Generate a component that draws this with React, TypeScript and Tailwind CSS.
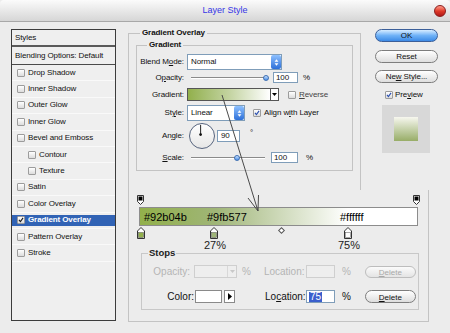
import React from 'react';

const styleItems = [
  { label: 'Drop Shadow' },
  { label: 'Inner Shadow' },
  { label: 'Outer Glow' },
  { label: 'Inner Glow' },
  { label: 'Bevel and Emboss' },
  { label: 'Contour', sub: true },
  { label: 'Texture', sub: true },
  { label: 'Satin' },
  { label: 'Color Overlay' },
  { label: 'Gradient Overlay', active: true },
  { label: 'Pattern Overlay' },
  { label: 'Stroke' },
];

const colorStops = [
  { pct: 0, fill: '#92b04b' },
  { pct: 27, fill: '#9fb577' },
  { pct: 75, fill: '#ffffff' },
];

const Box = ({ checked = false, blue = false }: { checked?: boolean; blue?: boolean }) => (
  <span className="relative inline-block w-[8px] h-[8px] shrink-0 border border-[#9c9c9c] rounded-[1px] bg-gradient-to-b from-[#ffffff] to-[#dcdcdc]">
    {checked && (
      <svg viewBox="0 0 8 8" className="absolute inset-0 w-full h-full">
        <path d="M1.3 3.8 L3.2 6 L6.8 1.2" fill="none" stroke={blue ? '#2a4fb0' : '#1a1a1a'} strokeWidth="1.5" />
      </svg>
    )}
  </span>
);

const Pill = ({ children, blue = false, disabled = false }: { children: React.ReactNode; blue?: boolean; disabled?: boolean }) => (
  <div
    className={
      blue
        ? 'h-[13px] rounded-full border border-[#3b5f99] bg-gradient-to-b from-[#d6ecff] via-[#6fb2f7] to-[#3c8ae6] flex items-center justify-center text-[#111]'
        : disabled
        ? 'h-[12px] rounded-full border border-[#bdbdbd] bg-gradient-to-b from-[#fbfbfb] to-[#e4e4e4] flex items-center justify-center text-[#a8a8a8]'
        : 'h-[13px] rounded-full border border-[#7d7d7d] bg-gradient-to-b from-[#ffffff] to-[#dedede] flex items-center justify-center text-[#111]'
    }
  >
    <span className="whitespace-nowrap">{children}</span>
  </div>
);

const Spin = () => (
  <div className="w-[10px] h-full rounded-[2px] bg-gradient-to-b from-[#8dc0ff] to-[#2c6fd8] flex items-center justify-center">
    <svg viewBox="0 0 6 10" className="w-[5px] h-[9px]">
      <path d="M3 1 L5.3 4 L0.7 4 Z M3 9 L5.3 6 L0.7 6 Z" fill="#fff" />
    </svg>
  </div>
);

const Slider = ({ w, pos }: { w: string; pos: number }) => (
  <div className={`relative ${w} h-[6px] flex items-center`}>
    <div className="w-full h-[2px] bg-[#8a8a8a] border-b border-white" />
    <div className="absolute top-[0px] w-[6px] h-[6px] rounded-full bg-gradient-to-b from-[#c9e2ff] to-[#4c8fe6] border border-[#3d6fb3]" style={{ left: `calc(${pos}% - 3px)` }} />
  </div>
);

const OpacityStop = () => (
  <svg viewBox="0 0 7 10" className="w-[7px] h-[10px]">
    <path d="M0.5 0.5 H6.5 V6.5 L3.5 9.5 L0.5 6.5 Z" fill="#fff" stroke="#333" />
    <rect x="1.5" y="1.5" width="4" height="4" fill="#000" />
  </svg>
);

const ColorStop = ({ fill }: { fill: string }) => (
  <svg viewBox="0 0 8 12" className="w-[8px] h-[12px]">
    <path d="M4 0.5 L7.5 4 V11.5 H0.5 V4 Z" fill="#fff" stroke="#333" />
    <rect x="1.5" y="5.5" width="5" height="5" fill={fill} stroke="#555" strokeWidth="0.5" />
  </svg>
);

export default function App() {
  return (
    <div className="relative w-[450px] h-[333px] overflow-hidden bg-[#ececec] font-['Liberation_Sans',Arial,sans-serif] text-[8px] tracking-[-0.1px] leading-none text-[#111] flex flex-col whitespace-nowrap">
      {/* title bar */}
      <div className="relative h-[22px] shrink-0 rounded-t-[4px] border-b border-[#a8a8a8] bg-gradient-to-b from-[#fbfbfb] to-[#d6d6d6] flex items-center justify-center">
        <span className="text-[9px] tracking-normal text-[#3535e6]">Layer Style</span>
        <div className="absolute right-[4px] top-[5px] w-[12px] h-[12px] rounded-full border border-[#8a1d1d] bg-gradient-to-b from-[#ff9a8a] via-[#e03a2a] to-[#b01818]" />
      </div>

      <div className="flex flex-1">
        {/* styles list */}
        <div className="ml-[11px] mt-[7px] w-[105px] h-[292px] border border-[#3c3c3c] bg-[#efefef] flex flex-col">
          <div className="h-[17px] px-[3px] flex items-center border-b-[2px] border-[#5a5a5a]">Styles</div>
          <div className="h-[18px] px-[3px] flex items-center border-b border-[#4a4a4a]">Blending Options: Default</div>
          {styleItems.map((it) => (
            <div key={it.label} className="h-[16.4px] py-[2px] border-b border-[#f9f9f9]">
              <div className={it.active ? 'h-full flex items-center bg-[#3163b5] text-white font-bold' : 'h-full flex items-center'}>
                <span className={it.sub ? 'ml-[16px] flex' : 'ml-[5px] flex'}>
                  <Box checked={it.active} />
                </span>
                <span className="ml-[3px]">{it.label}</span>
              </div>
            </div>
          ))}
        </div>

        <div className="ml-[12px] w-[322px] flex flex-col">
          <div className="flex items-start">
            {/* Gradient Overlay group */}
            <fieldset className="mt-[6px] w-[233px] h-[162px] border-l border-t border-r border-[#c3c3c3]">
              <legend className="ml-[11px] px-[2px] h-[10px] leading-[10px] font-bold">Gradient Overlay</legend>
              <fieldset className="mt-[2px] ml-[7px] w-[217px] border border-[#c3c3c3] pb-[7px]">
                <legend className="ml-[10px] px-[2px] h-[10px] leading-[10px] font-bold">Gradient</legend>
                {/* blend mode */}
                <div className="mt-[4px] h-[16px] flex items-center">
                  <span className="w-[47px] text-right">Blend M<u>o</u>de:</span>
                  <div className="ml-[3px] w-[95px] h-[16px] border border-[#7f9db9] bg-white flex items-center justify-between">
                    <span className="pl-[3px]">Normal</span>
                    <Spin />
                  </div>
                </div>
                {/* opacity */}
                <div className="mt-[2px] h-[11px] flex items-center">
                  <span className="w-[47px] text-right">O<u>p</u>acity:</span>
                  <div className="ml-[7px]"><Slider w="w-[76px]" pos={99} /></div>
                  <div className="ml-[6px] w-[25px] h-[11px] border border-[#7f9db9] bg-white flex items-center pl-[2px]">100</div>
                  <span className="ml-[5px]">%</span>
                </div>
                {/* gradient */}
                <div className="mt-[5px] h-[13px] flex items-center">
                  <span className="w-[47px] text-right">Gradient:</span>
                  <div className="ml-[3px] w-[92px] h-[13px] border border-[#555] flex">
                    <div className="flex-1 bg-gradient-to-r from-[#92b04b] via-[#c3d3a0] to-[#ffffff]" />
                    <div className="w-[8px] border-l border-[#555] bg-white flex items-center justify-center">
                      <svg viewBox="0 0 5 3" className="w-[5px] h-[3px]"><path d="M0 0 H5 L2.5 3 Z" fill="#000" /></svg>
                    </div>
                  </div>
                  <span className="ml-[9px] flex"><Box /></span>
                  <span className="ml-[3px] text-[#444]"><u>R</u>everse</span>
                </div>
                {/* style */}
                <div className="mt-[4px] h-[16px] flex items-center">
                  <span className="w-[47px] text-right">St<u>y</u>le:</span>
                  <div className="ml-[3px] w-[58px] h-[16px] border border-[#7f9db9] bg-white flex items-center justify-between">
                    <span className="pl-[3px]">Linear</span>
                    <Spin />
                  </div>
                  <span className="ml-[8px] flex"><Box checked blue /></span>
                  <span className="ml-[3px]">Align w<u>i</u>th Layer</span>
                </div>
                {/* angle */}
                <div className="mt-[2px] h-[26px] flex items-center">
                  <span className="w-[47px] text-right">An<u>g</u>le:</span>
                  <div className="relative ml-[5px] w-[26px] h-[26px] rounded-full border-[1.5px] border-[#56647e] bg-gradient-to-b from-[#ffffff] to-[#e6e6e6]">
                    <svg viewBox="0 0 26 26" className="absolute inset-0 w-full h-full">
                      <line x1="11.5" y1="11.5" x2="11.5" y2="1" stroke="#111" strokeWidth="1" />
                      <circle cx="11.5" cy="11.5" r="1.5" fill="#111" />
                    </svg>
                  </div>
                  <div className="ml-[2px] w-[23px] h-[12px] border border-[#7f9db9] bg-white flex items-center pl-[3px]">90</div>
                  <span className="ml-[10px] self-start mt-[6px]">°</span>
                </div>
                {/* scale */}
                <div className="mt-[3px] h-[11px] flex items-center">
                  <span className="w-[47px] text-right"><u>S</u>cale:</span>
                  <div className="ml-[7px]"><Slider w="w-[74px]" pos={62} /></div>
                  <div className="ml-[6px] w-[27px] h-[11px] border border-[#7f9db9] bg-white flex items-center pl-[2px]">100</div>
                  <span className="ml-[8px]">%</span>
                </div>
              </fieldset>
            </fieldset>

            {/* buttons */}
            <div className="mt-[7px] ml-[14px] w-[63px] flex flex-col">
              <Pill blue>OK</Pill>
              <div className="mt-[8px]"><Pill>Reset</Pill></div>
              <div className="mt-[7px]"><Pill>Ne<u>w</u> Style...</Pill></div>
              <div className="mt-[7px] h-[10px] ml-[10px] flex items-center">
                <Box checked blue />
                <span className="ml-[2px]">Pre<u>v</u>iew</span>
              </div>
              <div className="mt-[5px] ml-[7px] w-[48px] h-[48px] bg-[#d8d8d8] flex items-center justify-center">
                <div className="w-[24px] h-[24px] bg-gradient-to-b from-[#f7f7ef] to-[#98ad67]" />
              </div>
            </div>
          </div>

          {/* gradient editor */}
          <div className="w-[301px] h-[132px] border-l border-r border-b border-[#c3c3c3] pt-[5px] tracking-normal">
            <div className="ml-[10px] w-[279px]">
              <div className="relative h-[9px]">
                <div className="absolute left-[-2px] top-0"><OpacityStop /></div>
                <div className="absolute right-[-2px] top-0"><OpacityStop /></div>
              </div>
              <div className="relative mt-[3px] h-[19px] border border-[#8c8c8c] bg-[linear-gradient(to_right,#92b04b_0%,#9fb577_27%,#ffffff_75%,#ffffff_100%)] text-[11px] text-black">
                <span className="absolute left-[4px] top-[4px]">#92b04b</span>
                <span className="absolute left-[67px] top-[4px]">#9fb577</span>
                <span className="absolute left-[200px] top-[4px]">#ffffff</span>
              </div>
              <div className="relative mt-[1px] h-[12px]">
                {colorStops.map((s) => (
                  <div key={s.pct} className="absolute top-0" style={{ left: s.pct === 0 ? '-2px' : `calc(${s.pct}% - 4px)` }}>
                    <ColorStop fill={s.fill} />
                  </div>
                ))}
                <div className="absolute top-[1px] left-[140px] w-[5px] h-[5px] rotate-45 border border-[#555] bg-white" />
              </div>
              <div className="relative h-[11px] text-[11px] text-[#222]">
                <span className="absolute left-[65px] top-[1px]">27%</span>
                <span className="absolute left-[199px] top-[1px]">75%</span>
              </div>
            </div>

            {/* stops */}
            <fieldset className="ml-[12px] mt-[-2px] w-[278px] h-[62px] border border-[#c8c8c8] text-[10px]">
              <legend className="ml-[6px] px-[1px] h-[10px] leading-[10px] text-[9.5px] font-bold text-[#222]">Stops</legend>
              <div className="mt-[7px] h-[13px] flex items-center text-[#b4b4b4]">
                <span className="w-[48px] text-right">Opacity:</span>
                <div className="ml-[4px] w-[43px] h-[13px] border border-[#cfcfcf] bg-[#eeeeee] flex justify-end">
                  <div className="w-[9px] h-full border-l border-[#d8d8d8] flex items-center justify-center">
                    <svg viewBox="0 0 5 3" className="w-[5px] h-[3px]"><path d="M0 0 H5 L2.5 3 Z" fill="#c8c8c8" /></svg>
                  </div>
                </div>
                <span className="ml-[5px]">%</span>
                <span className="ml-[13px] w-[40px]">Location:</span>
                <div className="ml-[2px] w-[29px] h-[13px] border border-[#cfcfcf] bg-[#eeeeee]" />
                <span className="ml-[7px]">%</span>
                <div className="ml-[14px] w-[51px]"><Pill disabled><span className="text-[8px]"><u>D</u>elete</span></Pill></div>
              </div>
              <div className="mt-[12px] h-[13px] flex items-center">
                <span className="w-[52px] text-right">Color:</span>
                <div className="ml-[1px] w-[27px] h-[13px] border border-[#8a8a8a] bg-white" />
                <div className="ml-[2px] w-[11px] h-[13px] border border-[#8a8a8a] bg-white flex items-center justify-center">
                  <svg viewBox="0 0 4 7" className="w-[4px] h-[7px]"><path d="M0 0 L4 3.5 L0 7 Z" fill="#000" /></svg>
                </div>
                <span className="ml-[30px] w-[40px]">Lo<u>c</u>ation:</span>
                <div className="ml-[1px] w-[29px] h-[13px] border border-[#7f9db9] bg-white flex items-center pl-[2px]">
                  <span className="bg-[#3a5fcd] text-white px-[1px]">75</span>
                </div>
                <span className="ml-[7px]">%</span>
                <div className="ml-[14px] w-[51px]"><Pill><span className="text-[8px]"><u>D</u>elete</span></Pill></div>
              </div>
            </fieldset>
          </div>
        </div>
      </div>

      {/* annotation arrow */}
      <svg className="absolute left-0 top-0 w-[450px] h-[333px] pointer-events-none" viewBox="0 0 450 333">
        <path d="M222 95 L258 211 M248 198 L258 211 L258.5 195" fill="none" stroke="#4a4a4a" strokeWidth="1" />
      </svg>
    </div>
  );
}
